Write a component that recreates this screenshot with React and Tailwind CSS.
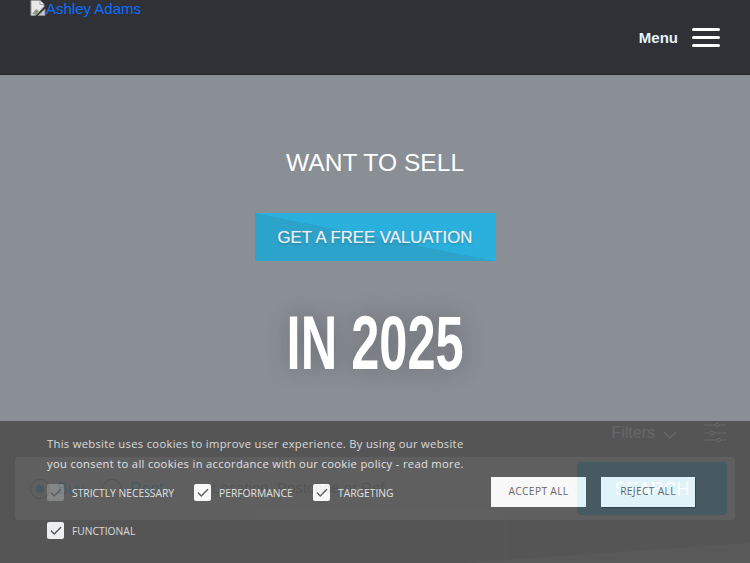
import { Check } from 'lucide-react';

const cookieOptions = [
  { label: 'STRICTLY NECESSARY', width: 'w-[147px]', disabled: true },
  { label: 'PERFORMANCE', width: 'w-[119px]' },
  { label: 'TARGETING', width: 'w-[100px]' },
  { label: 'FUNCTIONAL', width: 'w-[147px]' },
];

function BrokenImage() {
  return (
    <svg width="16" height="16" viewBox="0 0 16 16" className="shrink-0">
      <path d="M1 0.5h9l4 4v2L8 13l-3 2.5H1z" fill="#e8e8e8" stroke="#9a9a9a" strokeWidth="1" />
      <path d="M10 0.5v4h4" fill="#fff" stroke="#9a9a9a" strokeWidth="1" />
      <path d="M2 14l4-5 3 2-3 4z" fill="#8f9a86" />
      <path d="M15 9v6.5H8z" fill="#c9c9c9" stroke="#8a8a8a" strokeWidth="1" />
    </svg>
  );
}

function CookieOption({ label, width, disabled }) {
  return (
    <label className={`flex items-center gap-2 ${width}`}>
      <span className={`flex h-[17px] w-[17px] shrink-0 items-center justify-center rounded-[2px] ${disabled ? 'bg-white/25' : 'bg-white'}`}>
        <Check size={14} strokeWidth={2.4} className="text-[#4c4c4c]" />
      </span>
      <span className="text-[10.3px] leading-4 text-[#e4e4e4]">{label}</span>
    </label>
  );
}

export default function App() {
  return (
    <div className="relative h-[563px] w-[750px] overflow-hidden bg-[#8a8e95] font-['Liberation_Sans',sans-serif]">
      <header className="relative flex h-[75px] items-start justify-between border-b border-[#26282b] bg-[#2f3136] pl-[30px] pr-[30px]">
        <a className="flex items-start text-[15px] leading-[18px] text-[#0d6efd]">
          <BrokenImage />
          <span>Ashley Adams</span>
        </a>
        <div className="mt-[28px] flex items-center gap-[14px]">
          <span className="text-[15px] font-bold leading-[18px] text-[#e6f3fa]">Menu</span>
          <div className="flex w-[28px] flex-col gap-[5px]">
            <span className="h-[3px] rounded-sm bg-white" />
            <span className="h-[3px] rounded-sm bg-white" />
            <span className="h-[3px] rounded-sm bg-white" />
          </div>
        </div>
      </header>

      <main className="flex flex-col items-center pt-[72px]">
        <h2 className="text-[24.6px] leading-[32px] text-white">WANT TO SELL</h2>
        <a className="mt-[34px] flex h-[48px] w-[240px] items-center justify-center bg-[linear-gradient(to_top_right,#2ca3ca_50%,#2ab0dc_50%)] pt-px text-[16.8px] text-[#e8eef0] [text-shadow:0_0_1px_rgba(255,255,255,0.6),0_1px_2px_rgba(0,0,0,0.3)]">
          GET A FREE VALUATION
        </a>
        <h1 className="mt-[37px] scale-x-[0.665] whitespace-nowrap text-[76px] font-bold leading-[90px] text-white [text-shadow:0_0_30px_rgba(0,0,0,0.25)]">
          IN 2025
        </h1>

        <div className="mt-[33px] flex h-[24px] w-full items-center justify-end pr-[24px] text-white">
          <span className="text-base">Filters</span>
          <svg width="14" height="9" viewBox="0 0 14 9" fill="none" stroke="currentColor" strokeWidth="1.5" className="ml-2 mt-1">
            <path d="M1 1l6 6 6-6" />
          </svg>
          <svg width="22" height="20" viewBox="0 0 22 20" fill="none" stroke="currentColor" strokeWidth="1" className="ml-[27px]">
            <path d="M0 2h11M15 2h7M0 10h6M10 10h12M0 17h13M17 17h5" />
            <circle cx="13" cy="2" r="1.7" />
            <circle cx="8" cy="10" r="1.7" />
            <circle cx="15" cy="17" r="1.7" />
          </svg>
        </div>

        <div className="mt-[12px] flex h-[63px] w-[720px] items-center rounded bg-white/60 pl-[15px] pr-[8px]">
          <span className="flex h-5 w-5 items-center justify-center rounded-full border border-[#777]">
            <span className="h-[8px] w-[8px] rounded-full bg-[#2ab0dc]" />
          </span>
          <span className="ml-[7px] w-[45px] text-base text-[#2ab0dc]">Buy</span>
          <span className="h-5 w-5 rounded-full border border-[#777]" />
          <span className="ml-[8px] w-[82px] text-base text-[#2ab0dc]">Rent</span>
          <span className="text-[15px] text-[#888]">Location, Postcode or Ref</span>
          <button className="ml-auto h-[53px] w-[150px] rounded bg-[#2ab0dc] text-lg text-white">SEARCH</button>
        </div>
      </main>

      <div className="absolute bottom-0 right-0 h-[20px] w-[283px] bg-[#aaaaaa] [clip-path:polygon(0_100%,100%_0,100%_100%)]" />

      <section className="absolute inset-x-0 bottom-0 h-[142px] bg-[#4c4c4c] pl-[47px] pt-[13px] font-['Open_Sans',sans-serif] opacity-85">
        <p className="w-[425px] text-[11.2px] leading-5 tracking-[0.32px] text-[#e4e4e4]">
          This website uses cookies to improve user experience. By using our website you consent to all cookies in accordance with our cookie policy - read more.
        </p>
        <div className="mt-[3px] flex">
          <div className="mt-[7px] flex w-[444px] flex-wrap gap-y-[21px]">
            {cookieOptions.map((option) => (
              <CookieOption key={option.label} {...option} />
            ))}
          </div>
          <div className="flex gap-[15px] text-[10.3px] tracking-[0.3px] text-[#555]">
            <button className="h-[30px] w-[95px] bg-white">ACCEPT ALL</button>
            <button className="h-[30px] w-[94px] bg-white shadow-[1px_1px_0_#333]">REJECT ALL</button>
          </div>
        </div>
      </section>
    </div>
  );
}
